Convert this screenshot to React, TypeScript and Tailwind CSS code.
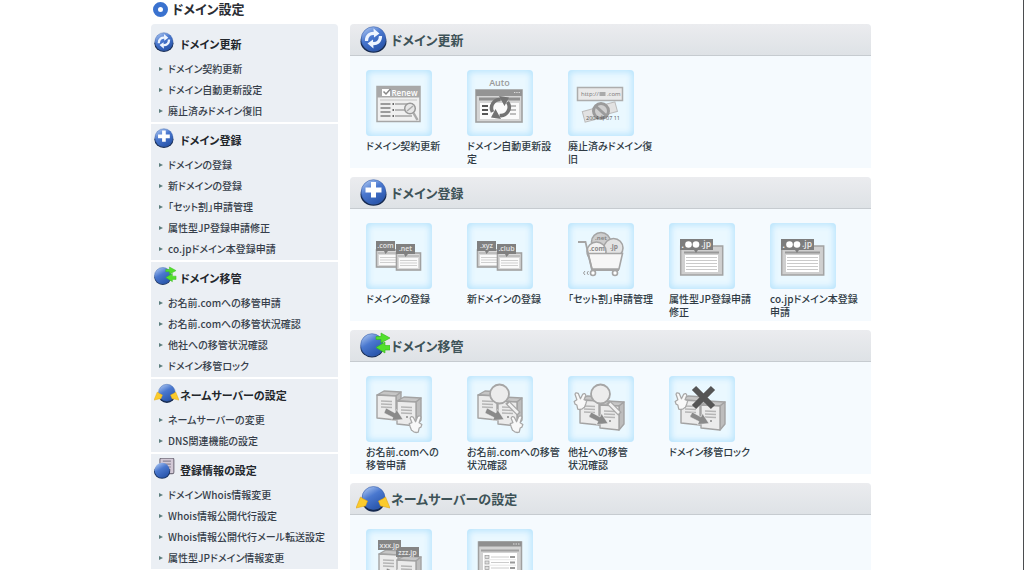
import type { ReactNode } from "react"

type MenuGroup = {
    title: string
    icon: string
    links: string[]
}

type Tile = {
    label: string
    icon: ReactNode
}

type Panel = {
    title: string
    icon: string
    tiles: Tile[]
}

const menu: MenuGroup[] = [
    { title: "ドメイン更新", icon: "renew", links: ["ドメイン契約更新", "ドメイン自動更新設定", "廃止済みドメイン復旧"] },
    { title: "ドメイン登録", icon: "add", links: ["ドメインの登録", "新ドメインの登録", "「セット割」申請管理", "属性型JP登録申請修正", "co.jpドメイン本登録申請"] },
    { title: "ドメイン移管", icon: "transfer", links: ["お名前.comへの移管申請", "お名前.comへの移管状況確認", "他社への移管状況確認", "ドメイン移管ロック"] },
    { title: "ネームサーバーの設定", icon: "server", links: ["ネームサーバーの変更", "DNS関連機能の設定"] },
    { title: "登録情報の設定", icon: "info", links: ["ドメインWhois情報変更", "Whois情報公開代行設定", "Whois情報公開代行メール転送設定", "属性型JPドメイン情報変更"] },
]

function BallIcon({ name, small }: { name: string, small?: boolean }) {
    const id = name + (small ? "-s" : "-l")
    const left = small && name != "server" ? 4 : 0
    return (
        <svg viewBox={`${left} 0 34 28`} className={small ? "w-[25px] h-[21px] mb-1 shrink-0" : "w-[34px] h-7 shrink-0"} aria-hidden="true">
            <defs>
                <linearGradient id={id} x1=".2" y1="0" x2=".8" y2="1">
                    <stop offset="0" stopColor="#a9c4f0" />
                    <stop offset=".4" stopColor="#4a78cf" />
                    <stop offset="1" stopColor="#2450a6" />
                </linearGradient>
            </defs>
            {name == "info" &&
                <g>
                    <rect x="12" y="0" width="19" height="21" rx="2" fill="#d3c9d6" stroke="#75707e" strokeWidth="1.5" />
                    <path d="M16 4h11M16 8h11M16 12h11M20 16h7" stroke="#8a8494" strokeWidth="1.5" />
                </g>
            }
            {name == "info" &&
                <g>
                    <ellipse cx="15" cy="18.5" rx="11" ry="9.5" fill="#16305f" />
                    <circle cx="15" cy="16.5" r="10.2" fill={`url(#${id})`} />
                </g>
            }
            {name == "transfer" &&
                <g>
                    <ellipse cx="16" cy="15.5" rx="11.5" ry="10" fill="#15294f" />
                    <circle cx="16" cy="13" r="11.3" fill={`url(#${id})`} stroke="#3a62ad" strokeWidth=".6" />
                </g>
            }
            {(name == "renew" || name == "add" || name == "server") &&
                <g>
                    <ellipse cx="17.5" cy="15.5" rx={name == "server" ? 11.5 : 13} ry="11.3" fill="#15294f" />
                    <circle cx="17.5" cy="13" r={name == "server" ? 11.5 : 12.3} fill={`url(#${id})`} stroke="#3a62ad" strokeWidth=".6" />
                </g>
            }
            {name == "renew" &&
                <g fill="none" stroke="#eef5ff" strokeWidth="3.2">
                    <path d="M10.500 15c0-6 4-8 8-7.500" />
                    <path d="M24.500 10c0 6-4 8-8 7.500" />
                    <path d="M17.500 2.500l6 5-5.500 4zM17.500 22.500l-6-5 5.500-4z" fill="#eef5ff" stroke="none" />
                </g>
            }
            {name == "add" && <path d="M17.500 3v15.500M9.500 11h16" stroke="#fff" strokeWidth="5" />}
            {name == "transfer" &&
                <g fill="#52e02c" stroke="#35b51b" strokeWidth=".6">
                    <path d="M20 4.500h5V1l9 5-9 5V7.500h-5z" />
                    <path d="M34 13.500h-5V10l-9 5.500 9 5.500v-3h5z" />
                </g>
            }
            {name == "server" &&
                <g fill="#fbcb2c" stroke="#e2a512" strokeWidth=".6">
                    <path d="M0 23L4.500 12l3 2 4 2-2 5-3 .5z" />
                    <path d="M34 23l-4.500-11-3 2-4 2 2 5 3 .5z" />
                </g>
            }
        </svg>
    )
}

function TileSvg({ children }: { children: ReactNode }) {
    return <svg viewBox="0 0 66 66" className="w-full h-full font-['Open_Sans','Noto_Sans',sans-serif]" aria-hidden="true">{children}</svg>
}

// small browser window with a name tag over it
function TagWindow({ x, y, tag }: { x: number, y: number, tag: string }) {
    return (
        <g transform={`translate(${x} ${y})`}>
            <rect x=".5" y="9" width="24" height="17" fill="#d9d9d9" stroke="#a0a0a0" strokeWidth="1.6" />
            <path d="M2 12h21" stroke="#b5b5b5" strokeWidth="1.5" />
            <rect x="3" y="14" width="19" height="10" fill="#fafafa" />
            <path d="M4 16.500h17M4 19h17M4 21.500h17" stroke="#cfcfcf" />
            <path d="M0 0h19v10h-7l-2.500 3-1.500-3H0z" fill="#808080" />
            <text x="9.500" y="7.300" textAnchor="middle" fontSize="7" fontWeight="600" fill="#e4e4e4">{tag}</text>
        </g>
    )
}

function RenewIcon() {
    return (
        <TileSvg>
            <rect x="11" y="16.500" width="43" height="35" fill="#f0f0f0" stroke="#a6a6a6" strokeWidth="1.5" />
            <rect x="11" y="16.500" width="43" height="11" fill="#a9a9a9" />
            <rect x="16" y="19" width="8" height="7" fill="#fff" />
            <path d="M17.500 21.500l2.500 2.500 4.500-5" fill="none" stroke="#888" strokeWidth="1.5" />
            <text x="25.500" y="26" fontSize="8" fontWeight="600" fill="#fff">Renew</text>
            <path d="M14 30h37" stroke="#c4c4c4" />
            <path d="M14.500 34h10M14.500 38h10M14.500 42h10M14.500 46h10" stroke="#808080" strokeWidth="1.6" />
            <path d="M29 34h18M29 40h10M29 46h17" stroke="#a5a5a5" strokeWidth="1.4" />
            <path d="M26.500 34h1.500M26.500 40h1.500M26.500 46h1.500" stroke="#666" strokeWidth="2" />
            <circle cx="44" cy="38.500" r="5.300" fill="#e6e6e6" stroke="#999" strokeWidth="1.5" />
            <path d="M41 41l6-5" stroke="#aaa" strokeWidth="1.5" />
            <path d="M47.500 43l4 7" stroke="#aaa" strokeWidth="2.5" />
        </TileSvg>
    )
}

function AutoIcon() {
    return (
        <TileSvg>
            <text x="32.500" y="15.500" textAnchor="middle" fontSize="9" fontWeight="600" fill="#9a9a9a">Auto</text>
            <rect x="9" y="20" width="46" height="32" fill="#d5d5d5" stroke="#a0a0a0" strokeWidth="1.6" />
            <rect x="9" y="20" width="46" height="6" fill="#949494" />
            <path d="M47 22.500h6" stroke="#ddd" strokeDasharray="1.300 1" />
            <path d="M12 29h41" stroke="#909090" strokeWidth="3" />
            <rect x="13" y="33" width="39" height="16" fill="#fafafa" />
            <path d="M15 36h6M15 40h6M15 44h6" stroke="#555" strokeWidth="2" />
            <path d="M43 36h6M43 40h6M43 44h6" stroke="#bdbdbd" strokeWidth="2" />
            <path d="M25.500 42a8.500 8.500 0 0 1 8-12.500M40.500 32a8.500 8.500 0 0 1-8 13.500" fill="none" stroke="#737373" strokeWidth="3.6" />
            <path d="M32 26l10 1.500-4.500 8.500zM34 49l-10-1.500 4.500-8.500z" fill="#737373" />
        </TileSvg>
    )
}

function DiscardIcon() {
    return (
        <TileSvg>
            <rect x="9.500" y="17.500" width="45" height="13" fill="#e9e9e9" stroke="#adadad" strokeWidth="1.5" />
            <text x="13" y="26" fontSize="6" fill="#777">http://</text>
            <rect x="31.500" y="22" width="6" height="4" fill="#aaa" />
            <text x="39" y="26" fontSize="6" fill="#777">.com</text>
            <g transform="rotate(-15 32 42)">
                <rect x="15" y="37" width="17" height="11" fill="#e2e2e2" stroke="#bcbcbc" />
                <rect x="33" y="36" width="16" height="10" fill="#e2e2e2" stroke="#bcbcbc" />
            </g>
            <circle cx="33" cy="41" r="7.500" fill="#cfcfcf" stroke="#9b9b9b" strokeWidth="3" />
            <path d="M27.500 36l11 10" stroke="#9b9b9b" strokeWidth="3" />
            <text x="18" y="49.500" fontSize="5.5" fill="#555">2004 年07 11</text>
        </TileSvg>
    )
}

function CartIcon() {
    return (
        <TileSvg>
            <g fill="#e3e3e3" stroke="#a5a5a5" strokeWidth="1.6">
                <circle cx="33" cy="19" r="9.500" fill="#cdcdcd" />
                <circle cx="45.500" cy="25" r="9.500" />
                <circle cx="28.500" cy="28.500" r="9.500" fill="#f2f2f2" />
                <path d="M20 30.500h34.500L51 46H24z" fill="#f6f6f6" />
                <path d="M10 19h7.500L24 47h27" fill="none" strokeWidth="1.8" />
                <circle cx="25" cy="50" r="2.500" fill="#fff" />
                <circle cx="47" cy="50" r="2.500" fill="#fff" />
            </g>
            <text x="33" y="17" textAnchor="middle" fontSize="6" fontWeight="700" fill="#888">.net</text>
            <text x="29" y="28" textAnchor="middle" fontSize="6.5" fontWeight="700" fill="#888">.com</text>
            <text x="46" y="26" textAnchor="middle" fontSize="6.5" fontWeight="700" fill="#888">.jp</text>
            <path d="M17 48q-3 2 0 4M20.500 48q-3 2 0 4" fill="none" stroke="#999" />
        </TileSvg>
    )
}

function JpIcon() {
    return (
        <TileSvg>
            <rect x="11.700" y="23" width="42" height="29" fill="#cfcfcf" stroke="#a3a3a3" strokeWidth="1.5" />
            <path d="M15 29.500h35" stroke="#999" strokeWidth="2" />
            <rect x="16" y="32" width="33" height="17" fill="#fff" />
            <path d="M17 34.500h31M17 37.500h31M17 40.500h31M17 43.500h31M17 46.500h31" stroke="#cacaca" />
            <path d="M11 16h33v11H29l-2 3-2-3H11z" fill="#7d7d7d" />
            <text x="12.500" y="24.500" fontSize="8" fontWeight="700" fill="#fff">.</text>
            <circle cx="19.500" cy="21.500" r="3.300" fill="#fff" />
            <circle cx="27" cy="21.500" r="3.300" fill="#fff" />
            <text x="32" y="24" fontSize="8.5" fontWeight="600" fill="#eee">.jp</text>
        </TileSvg>
    )
}

function ServerBox({ x, y }: { x: number, y: number }) {
    return (
        <g transform={`translate(${x} ${y})`} stroke="#a3a3a3" strokeWidth="1.4" strokeLinejoin="round">
            <path d="M0 4l7-4 17 1-5 4z" fill="#c6c6c6" />
            <path d="M19 5l5-4v22l-5 6z" fill="#bdbdbd" />
            <path d="M0 4l19 1v24L0 27z" fill="#ebebeb" />
            <path d="M4 10l11 .5M4 13l11 .5M4 16l11 .5" stroke="#b5b5b5" />
            <circle cx="10" cy="20" r="1" fill="#888" stroke="none" />
        </g>
    )
}

function Hand({ x, y, flip }: { x: number, y: number, flip?: boolean }) {
    return (
        <g transform={`translate(${x} ${y}) scale(${flip ? -.9 : .9} .9)`}>
            <path d="M-5 7l-1.500-4-1-3.500 3-1-2-5q1-3 3.500-1l2.500 5 2.500-6q3-1.500 3.500 1l-2 6 3 2-1 3-2 1-1 4.500q-4 1.500-7-2z" fill="#f8f8f8" stroke="#a8a8a8" strokeWidth="1.4" strokeLinejoin="round" />
        </g>
    )
}

function MoveArrow({ x, y }: { x: number, y: number }) {
    return <path transform={`translate(${x} ${y})`} d="M2-2l9 5 1.500-3.500L19 9.500 7.500 10.500l1.500-3L0 3z" fill="#8a8a8a" stroke="#f4f4f4" strokeWidth=".5" />
}

function Magnifier() {
    return (
        <g>
            <path d="M40 26l12 12" stroke="#a5a5a5" strokeWidth="5" />
            <path d="M41.500 27.500l9.500 9.500" stroke="#f1f1f1" strokeWidth="2.5" />
            <circle cx="32.500" cy="18" r="9.500" fill="#ececec" stroke="#a6a6a6" strokeWidth="1.8" />
        </g>
    )
}

function TransferIcon({ search }: { search?: boolean }) {
    return (
        <TileSvg>
            <ServerBox x={11} y={15} />
            <ServerBox x={31} y={21} />
            {search && <Magnifier />}
            <MoveArrow x={18} y={34} />
            <Hand x={50} y={48} />
        </TileSvg>
    )
}

function TransferOutIcon({ locked }: { locked?: boolean }) {
    return (
        <TileSvg>
            <ServerBox x={12} y={20} />
            <ServerBox x={32} y={25} />
            <Hand x={12} y={25} flip />
            {locked ? <path d="M25 12l19 19M44 12L25 31" stroke="#555" strokeWidth="6" /> : <Magnifier />}
            <MoveArrow x={21} y={38} />
        </TileSvg>
    )
}

function NameServerIcon() {
    return (
        <TileSvg>
            <ServerBox x={13} y={21} />
            <ServerBox x={31} y={27} />
            <MoveArrow x={19} y={41} />
            <rect x="12" y="11" width="23" height="10" fill="#858585" />
            <rect x="30" y="18" width="23" height="10" fill="#858585" />
            <text x="23.500" y="18.500" textAnchor="middle" fontSize="7" fontWeight="600" fill="#e8e8e8">xxx.jp</text>
            <text x="41.500" y="25.500" textAnchor="middle" fontSize="7" fontWeight="600" fill="#e8e8e8">zzz.jp</text>
        </TileSvg>
    )
}

function DnsIcon() {
    return (
        <TileSvg>
            <rect x="11.500" y="13" width="43" height="40" fill="#d2d2d2" stroke="#a0a0a0" strokeWidth="1.5" />
            <rect x="11.500" y="12.500" width="43" height="5" fill="#8f8f8f" />
            <path d="M46 15h7" stroke="#ddd" strokeDasharray="1.500 1" />
            <path d="M14 21.500h38" stroke="#a0a0a0" strokeWidth="2" />
            <rect x="16" y="24" width="34" height="26" fill="#fff" />
            {[28, 33.5, 39, 44.5].map((y) => (
                <g key={y}>
                    <rect x="18" y={y - 1.5} width="4" height="3" fill="#ddd" stroke="#999" strokeWidth=".7" />
                    <path d={`M24 ${y}h18`} stroke="#ccc" />
                    <path d={`M43 ${y}h5`} stroke="#999" strokeWidth="2" />
                    <path d={`M17 ${y + 2.7}h32`} stroke="#ddd" strokeWidth=".7" />
                </g>
            ))}
        </TileSvg>
    )
}

const panels: Panel[] = [
    {
        title: "ドメイン更新",
        icon: "renew",
        tiles: [
            { label: "ドメイン契約更新", icon: <RenewIcon /> },
            { label: "ドメイン自動更新設\n定", icon: <AutoIcon /> },
            { label: "廃止済みドメイン復\n旧", icon: <DiscardIcon /> },
        ],
    },
    {
        title: "ドメイン登録",
        icon: "add",
        tiles: [
            { label: "ドメインの登録", icon: <TileSvg><TagWindow x={10} y={18} tag=".com" /><TagWindow x={30} y={21} tag=".net" /></TileSvg> },
            { label: "新ドメインの登録", icon: <TileSvg><TagWindow x={10} y={18} tag=".xyz" /><TagWindow x={30} y={21} tag=".club" /></TileSvg> },
            { label: "「セット割」申請管理", icon: <CartIcon /> },
            { label: "属性型JP登録申請\n修正", icon: <JpIcon /> },
            { label: "co.jpドメイン本登録\n申請", icon: <JpIcon /> },
        ],
    },
    {
        title: "ドメイン移管",
        icon: "transfer",
        tiles: [
            { label: "お名前.comへの\n移管申請", icon: <TransferIcon /> },
            { label: "お名前.comへの移管\n状況確認", icon: <TransferIcon search /> },
            { label: "他社への移管\n状況確認", icon: <TransferOutIcon /> },
            { label: "ドメイン移管ロック", icon: <TransferOutIcon locked /> },
        ],
    },
    {
        title: "ネームサーバーの設定",
        icon: "server",
        tiles: [
            { label: "ネームサーバーの\n変更", icon: <NameServerIcon /> },
            { label: "DNS関連機能の設定", icon: <DnsIcon /> },
        ],
    },
]

function Sidebar() {
    return (
        <nav className="w-[187px] shrink-0 flex flex-col gap-0.5 rounded-t overflow-hidden">
            {menu.map((group) => (
                <section key={group.title} className="group bg-[#ebeff4]">
                    <h2 className="flex items-center gap-px pl-[3px] pt-0.5 h-[31px] group-first:h-[35px] group-first:pt-1.5 text-[11px] font-bold text-[#22262b]">
                        <BallIcon name={group.icon} small />
                        {group.title}
                    </h2>
                    <ul>
                        {group.links.map((link) => (
                            <li key={link}>
                                <a href="#" className="flex items-center gap-[5px] pl-2 pb-0.5 h-[21px] text-[10px] font-medium text-[#363e4a] hover:underline">
                                    <span className="border-y-2 border-l-4 border-y-transparent border-l-[#5b7d7d]"></span>
                                    {link}
                                </a>
                            </li>
                        ))}
                    </ul>
                </section>
            ))}
        </nav>
    )
}

function App() {
    return (
        <div className="min-h-screen bg-white pr-px border-r border-[#4b4d4f] font-['Noto_Sans_CJK_JP',sans-serif] [font-feature-settings:'palt']">
            <div className="max-w-[720px] mx-auto">
                <h1 className="flex items-center gap-1 h-[18px] mb-1.5 pl-0.5 text-[13px] leading-[18px] font-bold text-[#2a2d33]">
                    <span className="size-[15px] rounded-full border-[5px] border-[#3a72cf]"></span>
                    ドメイン設定
                </h1>
                <div className="flex gap-3 items-start">
                    <Sidebar />
                    <main className="flex-1 flex flex-col gap-[9px]">
                        {panels.map((panel) => (
                            <section key={panel.title} className="bg-[#f5fafe] rounded-t overflow-hidden min-h-36">
                                <h2 className="flex items-center gap-px h-8 pl-1.5 border-b border-[#c6cbd0] bg-linear-to-b from-[#ebecef] to-[#dee2e6] text-[13px] font-bold text-[#3e5358]">
                                    <BallIcon name={panel.icon} />
                                    {panel.title}
                                </h2>
                                <ul className="flex pl-4 pt-3.5 pb-[3px]">
                                    {panel.tiles.map((tile) => (
                                        <li key={tile.label} className="w-[101px]">
                                            <a href="#" className="flex flex-col gap-[3px] min-h-[95px] text-[10px] leading-[13px] font-medium text-[#2f3a44] whitespace-pre">
                                                <span className="size-[66px] rounded bg-[#eaf8ff] shadow-[inset_0_0_6px_2px_#b9e4fd]">{tile.icon}</span>
                                                {tile.label}
                                            </a>
                                        </li>
                                    ))}
                                </ul>
                            </section>
                        ))}
                    </main>
                </div>
            </div>
        </div>
    )
}

export default App
